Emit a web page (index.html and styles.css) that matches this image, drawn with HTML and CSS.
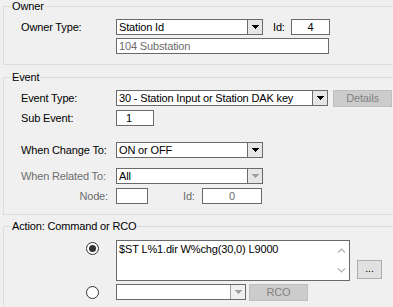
FILE: index.html
```html
<!DOCTYPE html>
<html>
<head>
<meta charset="utf-8">
<link rel="stylesheet" href="styles.css">
</head>
<body>
<div class="page">
  <fieldset class="group owner">
    <legend>Owner</legend>
    <div class="content">
      <div class="row first">
        <span class="lbl">Owner Type:</span>
        <div class="combo w147"><span class="val">Station Id</span><span class="btn"><svg width="7" height="5" viewBox="0 0 7 5"><path d="M0 0h7v1h-1v1h-1v1h-1v1h-1v-1h-1v-1h-1v-1h-1z" fill="#000"/></svg></span></div>
        <span class="idl">Id:</span>
        <div class="box w39 center">4</div>
      </div>
      <div class="row gap3">
        <span class="lbl"></span>
        <div class="box w213 dis">104 Substation</div>
      </div>
    </div>
  </fieldset>

  <fieldset class="group event">
    <legend>Event</legend>
    <div class="content">
      <div class="row first">
        <span class="lbl">Event Type:</span>
        <div class="combo w212"><span class="val">30 - Station Input or Station DAK key</span><span class="btn"><svg width="7" height="5" viewBox="0 0 7 5"><path d="M0 0h7v1h-1v1h-1v1h-1v1h-1v-1h-1v-1h-1v-1h-1z" fill="#000"/></svg></span></div>
        <div class="button dis details">Details</div>
      </div>
      <div class="row gap4">
        <span class="lbl">Sub Event:</span>
        <div class="box w38 sub">1</div>
      </div>
      <div class="row gap16">
        <span class="lbl">When Change To:</span>
        <div class="combo w147"><span class="val">ON or OFF</span><span class="btn"><svg width="7" height="5" viewBox="0 0 7 5"><path d="M0 0h7v1h-1v1h-1v1h-1v1h-1v-1h-1v-1h-1v-1h-1z" fill="#000"/></svg></span></div>
      </div>
      <div class="row gap10">
        <span class="lbl dim">When Related To:</span>
        <div class="combo w147"><span class="val">All</span><span class="btn"><svg width="7" height="5" viewBox="0 0 7 5"><path d="M0 0h7v1h-1v1h-1v1h-1v1h-1v-1h-1v-1h-1v-1h-1z" fill="#a0a0a0"/></svg></span></div>
      </div>
      <div class="row gap4">
        <span class="lbl dim right">Node:</span>
        <div class="box w32"></div>
        <span class="idl2 dim">Id:</span>
        <div class="box w60 center dis">0</div>
      </div>
    </div>
  </fieldset>

  <fieldset class="group action">
    <legend>Action: Command or RCO</legend>
    <div class="content">
      <div class="row top first7">
        <span class="lbl radio-cell"><span class="radio on"></span></span>
        <div class="textarea">
          <span class="ta-text">$ST L%1.dir W%chg(30,0) L9000</span>
          <span class="scroll">
            <svg width="9" height="5" viewBox="0 0 9 5"><path d="M1 4.5L4.5 1L8 4.5" fill="none" stroke="#b0b0b0" stroke-width="1.2"/></svg>
            <svg width="9" height="5" viewBox="0 0 9 5"><path d="M1 0.5L4.5 4L8 0.5" fill="none" stroke="#b0b0b0" stroke-width="1.2"/></svg>
          </span>
        </div>
        <div class="button dots">...</div>
      </div>
      <div class="row gap3">
        <span class="lbl radio-cell"><span class="radio"></span></span>
        <div class="combo w130 disc"><span class="val"></span><span class="btn"><svg width="7" height="5" viewBox="0 0 7 5"><path d="M0 0h7v1h-1v1h-1v1h-1v1h-1v-1h-1v-1h-1v-1h-1z" fill="#a0a0a0"/></svg></span></div>
        <div class="button dis rco">RCO</div>
      </div>
    </div>
  </fieldset>
</div>
</body>
</html>
```

FILE: styles.css
```css
html, body {
  margin: 0;
  padding: 0;
  background: #f0f0f0;
}
body {
  width: 393px;
  height: 307px;
  overflow: hidden;
  font-family: "Liberation Sans", Arial, sans-serif;
  font-size: 11px;
  letter-spacing: -0.15px;
  color: #000;
}
.page {
  width: 393px;
  overflow: hidden;
}
.group {
  margin: 0 0 0 3px;
  padding: 0;
  border: 1px solid #dcdcdc;
  width: 440px;
  min-width: 0;
  box-sizing: border-box;
}
.group legend {
  margin-left: 7px;
  padding: 0 1px;
  line-height: 13px;
  font-size: 11px;
  font-weight: normal;
}
.event { margin-top: 6px; }
.action { margin-top: 5px; height: 100px; }
.content {
  padding: 0 0 0 17px;
}
.owner .content { padding-bottom: 10px; }
.event .content { padding-bottom: 10px; }
.row {
  display: flex;
  align-items: center;
  height: 16px;
}
.row.top {
  align-items: flex-start;
  height: auto;
}
.first { margin-top: 6px; }
.first7 { margin-top: 7px; }
.gap3 { margin-top: 3px; }
.gap4 { margin-top: 4px; }
.gap10 { margin-top: 10px; }
.gap16 { margin-top: 16px; }
.lbl {
  width: 95px;
  flex: none;
  white-space: nowrap;
}
.lbl.right {
  text-align: right;
  padding-right: 8px;
  box-sizing: border-box;
}
.dim { color: #6d6d6d; }
.combo {
  display: flex;
  height: 16px;
  box-sizing: border-box;
  border: 1px solid #6a6a6a;
  background: #fff;
  flex: none;
}
.combo .val {
  flex: 1;
  padding-left: 2px;
  line-height: 14px;
  white-space: nowrap;
  overflow: hidden;
}
.combo .btn {
  width: 14px;
  border-left: 1px solid #6a6a6a;
  background: #e6e6e6;
  display: flex;
  align-items: center;
  justify-content: center;
}
.combo.disc .btn { background: #f0f0f0; border-left-color: #a0a0a0; }
.w147 { width: 147px; }
.w212 { width: 212px; }
.w130 { width: 130px; }
.w39 { width: 39px; }
.w38 { width: 38px; }
.w32 { width: 32px; }
.w60 { width: 60px; }
.w213 { width: 213px; }
.box {
  height: 16px;
  box-sizing: border-box;
  border: 1px solid #6a6a6a;
  background: #fff;
  padding-left: 2px;
  line-height: 14px;
  flex: none;
}
.box.center { text-align: center; padding-left: 0; }
.box.dis { color: #6d6d6d; }
.box.sub { padding-left: 9px; }
.idl {
  margin-left: 10px;
  width: 18px;
  flex: none;
}
.idl2 {
  margin-left: 35px;
  width: 19px;
  flex: none;
}
.button {
  height: 17px;
  box-sizing: border-box;
  display: flex;
  align-items: center;
  justify-content: center;
  flex: none;
}
.button.dis {
  background: #cccccc;
  border: 1px solid #bfbfbf;
  color: #838383;
}
.details {
  width: 59px;
  margin-left: 5px;
}
.rco {
  width: 59px;
  margin-left: 3px;
}
.radio-cell {
  display: flex;
  align-items: center;
  padding-left: 65px;
  box-sizing: border-box;
  height: 16px;
}
.row.top .radio-cell { height: 14px; margin-top: 1px; }
.radio {
  width: 13px;
  height: 13px;
  box-sizing: border-box;
  border: 1px solid #333;
  border-radius: 50%;
  background: #fff;
  display: flex;
  align-items: center;
  justify-content: center;
}
.radio.on::after {
  content: "";
  width: 7px;
  height: 7px;
  border-radius: 50%;
  background: #333;
}
.textarea {
  width: 234px;
  height: 41px;
  box-sizing: border-box;
  border: 1px solid #6a6a6a;
  background: #fff;
  display: flex;
  flex: none;
}
.ta-text {
  flex: 1;
  padding: 1px 0 0 2px;
  line-height: 14px;
  white-space: nowrap;
}
.scroll {
  width: 16px;
  display: flex;
  flex-direction: column;
  align-items: center;
  justify-content: space-between;
  padding: 7px 0 7px;
  box-sizing: border-box;
}
.dots {
  width: 25px;
  height: 19px;
  margin-left: 7px;
  margin-top: 20px;
  background: #e1e1e1;
  border: 1px solid #adadad;
  padding-bottom: 3px;
}
```
